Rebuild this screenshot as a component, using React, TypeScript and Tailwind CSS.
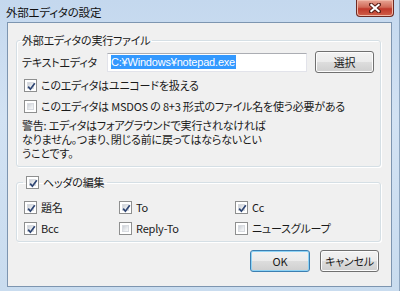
import React from "react";

const FONT = "[font-family:'Noto_Sans_CJK_JP','Noto_Sans',sans-serif] [font-feature-settings:'palt'] tracking-[-0.2px]";

function Check({ checked }: { checked: boolean }) {
  return (
    <span className="relative inline-block w-[13px] h-[13px] shrink-0 border border-[#8e8f8f] bg-white">
      <span className="absolute inset-[2px] bg-[linear-gradient(135deg,#cbcfd5,#eef0f2_70%,#f6f6f6)] border border-[#d8dbe0]" />
      {checked && (
        <svg className="absolute left-[1px] top-[1px]" width="11" height="11" viewBox="0 0 11 11">
          <path d="M2.2 5.6 L4.4 8.2 L8.8 2.2" fill="none" stroke="#2e4573" strokeWidth="1.7" />
        </svg>
      )}
    </span>
  );
}

function CheckRow({ checked, label, className = "" }: { checked: boolean; label: string; className?: string }) {
  return (
    <div className={`flex items-center h-[16px] gap-[4px] ${className}`}>
      <Check checked={checked} />
      <span className="leading-[16px] whitespace-nowrap">{label}</span>
    </div>
  );
}

function Button({ label, def = false, className = "" }: { label: string; def?: boolean; className?: string }) {
  return (
    <div
      className={`flex items-center justify-center h-[22px] rounded-[3px] border ${
        def
          ? "border-[#3c7fb1] shadow-[inset_0_0_0_1px_#8fd3f5]"
          : "border-[#707070] shadow-[inset_0_0_0_1px_#fcfcfc]"
      } bg-[linear-gradient(#f2f2f2,#ebebeb_50%,#dddddd_50%,#cfcfcf)] text-[#1a1a1a] leading-[16px] ${className}`}
    >
      {label}
    </div>
  );
}

export default function App() {
  return (
    <div
      className={`w-[400px] h-[291px] flex flex-col bg-[linear-gradient(#c4d8ee,#d2e2f3_40%,#c9dcef)] border-r border-[#8ea6c0] text-[11px] text-[#1a1a1a] ${FONT} overflow-hidden`}
    >
      {/* title bar */}
      <div className="h-[22px] flex items-start shrink-0">
        <div className="pl-[6px] pt-[4px] leading-[16px] text-[11.5px] text-[#111]">外部エディタの設定</div>
        <div className="ml-auto mr-[5px] w-[38px] h-[17px] rounded-b-[4px] border border-t-0 border-[#6e2a22] bg-[linear-gradient(#e8a595,#d06a58_45%,#c0392b_55%,#d0604a)] shadow-[inset_0_0_0_1px_#f0b8a8] flex items-center justify-center">
          <svg width="12" height="10" viewBox="0 0 12 10">
            <path d="M2 1.5 L10 8.5 M10 1.5 L2 8.5" stroke="#5a1f18" strokeWidth="4" strokeLinecap="square" />
            <path d="M2.3 1.8 L9.7 8.2 M9.7 1.8 L2.3 8.2" stroke="#ffffff" strokeWidth="2" strokeLinecap="square" />
          </svg>
        </div>
      </div>

      {/* client */}
      <div className="mx-[7px] mb-[4px] flex-1 border border-[#7d95b0] bg-[#f0f0f0] pl-[8px] pr-[10px] flex flex-col">
        {/* group 1 */}
        <fieldset className="mt-[9px] border border-[#d5dfe5] rounded-[3px] pl-[5px] pr-[6px] pb-[6px] shadow-[inset_1px_1px_0_#ffffff,1px_1px_0_#ffffff]">
          <legend className="px-[2px] -ml-[2px] leading-[16px]">外部エディタの実行ファイル</legend>
          <div className="mt-[3px] flex items-center h-[22px]">
            <span className="w-[85px] leading-[16px] whitespace-nowrap">テキストエディタ</span>
            <div className="w-[200px] h-[19px] bg-white border border-[#e2e3ea] border-t-[#abadb3] flex items-center pl-[3px]">
              <span className="bg-[#3399ff] text-white leading-[14px] h-[14px] pr-[1px] [font-family:'Liberation_Sans',Arial,sans-serif]">
                C:¥Windows¥notepad.exe
              </span>
            </div>
            <Button label="選択" className="ml-auto w-[59px]" />
          </div>
          <CheckRow checked label="このエディタはユニコードを扱える" className="mt-[4px] ml-[2px]" />
          <CheckRow
            checked={false}
            label="このエディタは MSDOS の 8+3 形式のファイル名を使う必要がある"
            className="mt-[5px] ml-[2px]"
          />
          <div className="mt-[4px] leading-[14px]">
            警告: エディタはフォアグラウンドで実行されなければ
            <br />
            なりません。つまり、閉じる前に戻ってはならないとい
            <br />
            うことです。
          </div>
        </fieldset>

        {/* group 2 */}
        <fieldset className="mt-[7px] border border-[#d5dfe5] rounded-[3px] pl-[5px] pr-[6px] pb-[5px] shadow-[inset_1px_1px_0_#ffffff,1px_1px_0_#ffffff]">
          <legend className="px-[3px] ml-[1px]">
            <CheckRow checked label="ヘッダの編集" />
          </legend>
          <div className="mt-[9px] grid grid-cols-[95px_116px_1fr] gap-y-[5px]">
            <CheckRow checked label="題名" className="ml-[2px]" />
            <CheckRow checked label="To" className="ml-[2px]" />
            <CheckRow checked label="Cc" className="ml-[2px]" />
            <CheckRow checked label="Bcc" className="ml-[2px]" />
            <CheckRow checked={false} label="Reply-To" className="ml-[2px]" />
            <CheckRow checked={false} label="ニュースグループ" className="ml-[2px]" />
          </div>
        </fieldset>

        {/* buttons */}
        <div className="mt-[8px] flex justify-end gap-[10px] mr-[2px]">
          <Button label="OK" def className="w-[60px]" />
          <Button label="キャンセル" className="w-[59px]" />
        </div>
      </div>
    </div>
  );
}
